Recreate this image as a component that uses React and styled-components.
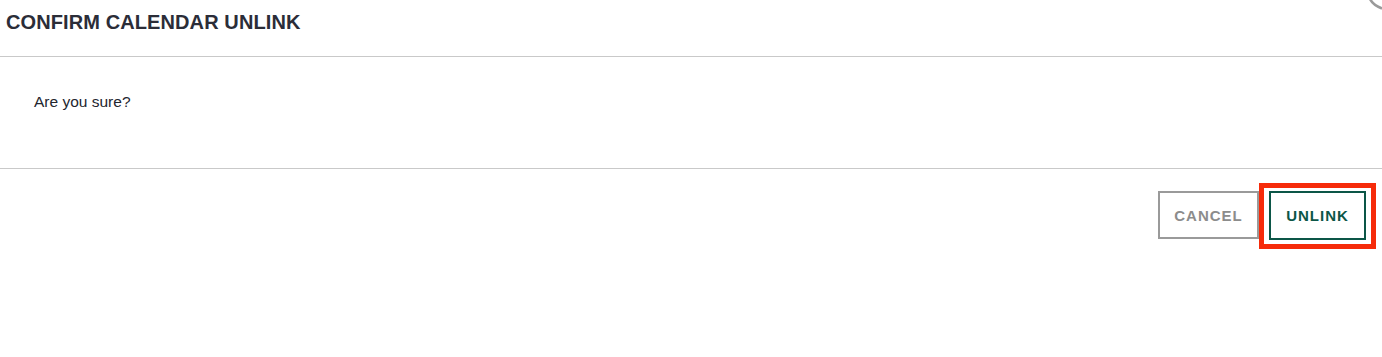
import React from "react";
import styled, { createGlobalStyle } from "styled-components";

const Global = createGlobalStyle`
  html, body { margin: 0; padding: 0; background: #ffffff; }
  body { font-family: "Liberation Sans", Arial, sans-serif; }
  * { box-sizing: border-box; }
`;

const Modal = styled.div`
  position: relative;
  width: 1382px;
  height: 357px;
  background: #ffffff;
  overflow: hidden;
`;

const Header = styled.div`
  height: 57px;
  padding: 10px 0 0 6px;
  border-bottom: 1px solid #c9c9c9;
`;

const Title = styled.h2`
  margin: 0;
  font-size: 20px;
  line-height: 24px;
  font-weight: 700;
  letter-spacing: 0.1px;
  color: #2b2d38;
`;

const CloseArc = styled.svg`
  position: absolute;
  top: 0;
  right: 0;
  width: 14px;
  height: 10px;
`;

const Body = styled.div`
  height: 112px;
  padding: 35px 0 0 34px;
  border-bottom: 1px solid #c9c9c9;
`;

const Message = styled.p`
  margin: 0;
  font-size: 15.5px;
  line-height: 20px;
  color: #23252e;
`;

const Footer = styled.div`
  display: flex;
  justify-content: flex-end;
  align-items: flex-start;
  padding: 14px 6px 0 0;
`;

const Button = styled.button`
  display: flex;
  align-items: center;
  justify-content: center;
  width: ${(p) => p.$w}px;
  height: ${(p) => p.$h}px;
  margin-top: ${(p) => p.$mt || 0}px;
  padding: 0;
  background: #ffffff;
  border: 2px solid ${(p) => p.$color};
  color: ${(p) => p.$text};
  font-family: "Liberation Sans", Arial, sans-serif;
  font-size: 15px;
  font-weight: 700;
  letter-spacing: 1px;
  cursor: pointer;
`;

const Highlight = styled.div`
  display: flex;
  border: 5px solid #f62b0a;
  padding: 3px 5px 4px 5px;
`;

export default function App() {
  return (
    <>
      <Global />
      <Modal>
        <Header>
          <Title>CONFIRM CALENDAR UNLINK</Title>
        </Header>
        <CloseArc viewBox="0 0 14 10">
          <path d="M2 -1 Q5 5 14 8.5" fill="none" stroke="#9a9a9a" strokeWidth="2.6" />
        </CloseArc>
        <Body>
          <Message>Are you sure?</Message>
        </Body>
        <Footer>
          <Button $w={101} $h={48} $mt={8} $color="#9a9a9a" $text="#8c8c8c">
            CANCEL
          </Button>
          <Highlight>
            <Button $w={97} $h={49} $color="#0c5647" $text="#0c5647">
              UNLINK
            </Button>
          </Highlight>
        </Footer>
      </Modal>
    </>
  );
}
